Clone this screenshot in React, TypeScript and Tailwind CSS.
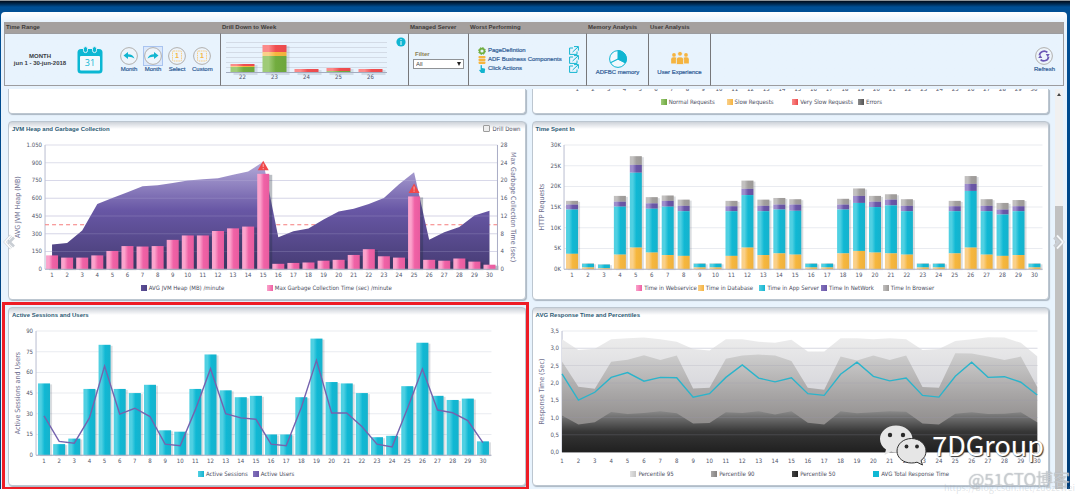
import React from 'react';

const DAYS = Array.from({ length: 30 }, (_, i) => i + 1);

const HEAP = [208, 222, 327, 552, 602, 650, 701, 709, 729, 749, 760, 768, 799, 825, 909, 270, 321, 343, 419, 487, 510, 552, 602, 718, 819, 248, 312, 357, 453, 493];
const GC = [3.1, 2.6, 2.6, 3.1, 4.1, 5.2, 5.1, 5.2, 6.6, 7.6, 7.6, 8.6, 9.2, 9.6, 21.5, 1.2, 1.4, 1.5, 1.9, 2.1, 3.2, 4.5, 2.9, 2.6, 16.4, 2.1, 1.9, 2.4, 1.7, 1];

// cumulative tops in thousands: database, app server, network, browser
const QUIET = [0.4, 1.3, 1.3, 1.4];
const TIME_SPENT = [
  [3.7, 14.4, 15.6, 16.5], QUIET, [0.2, 1.1, 1.1, 1.2], [3.5, 15.1, 16.3, 17.7], [5.2, 23.3, 25.2, 27.3],
  [4, 14.6, 15.9, 17.4], [3.4, 15.1, 16.5, 17.8], [3.2, 14, 15.3, 16.8], QUIET, QUIET,
  [3.2, 14, 15.2, 16.5], [5.2, 17.9, 19.4, 21.4], [3.4, 14, 15.3, 16.8], [3.8, 14.4, 15.6, 17.2], [3.5, 14.1, 15.6, 16.9],
  QUIET, QUIET, [3.8, 14.4, 15.6, 17], [4.4, 16, 17.7, 19.5], [4, 15, 16.3, 17.7],
  [3.8, 15.4, 16.8, 18.1], [3.5, 14, 15.3, 16.9], QUIET, QUIET, [3.8, 14, 15.2, 16.5],
  [5.2, 18.9, 20.6, 22.5], [3.5, 14, 15.3, 16.9], [3.2, 13.2, 14.4, 16], [3.4, 14, 15.2, 16.7], QUIET,
];

const SESSIONS = [52, 8, 12, 48, 80, 48, 45, 51, 18, 17, 48, 73, 47, 42, 43, 15, 15, 42, 84.5, 53, 52, 45, 13, 14, 50, 81.5, 43, 40, 41, 10];
const USERS = [28.5, 10, 8.7, 27, 64.6, 29.8, 34, 28, 8, 6.8, 33, 62.7, 30, 27, 26, 8, 6.8, 34.6, 68.7, 30.5, 30.5, 20.8, 8, 6, 33.5, 62.4, 32.7, 30.7, 25, 9];

const P95 = [3.26, 2.95, 2.99, 3.26, 3.29, 3.31, 3.26, 3.19, 2.98, 2.94, 3.26, 3.26, 3.19, 3.16, 3.25, 2.91, 2.91, 3.29, 3.29, 3.26, 3.29, 3.26, 2.95, 2.98, 3.21, 3.26, 3.32, 3.31, 3.16, 2.77];
const P90 = [2.62, 1.89, 1.83, 2.61, 2.67, 2.8, 2.66, 2.79, 1.84, 1.86, 2.7, 2.79, 2.82, 2.79, 2.63, 1.86, 1.8, 2.76, 2.65, 2.79, 2.66, 2.79, 1.88, 1.86, 2.86, 2.85, 2.76, 2.66, 2.76, 1.88];
const P50 = [1.06, 0.8, 0.86, 1.16, 1.1, 1.13, 1.18, 1.12, 0.83, 0.84, 1.15, 1.13, 1.18, 1.09, 1.18, 0.85, 0.8, 1.18, 1.12, 1.15, 1.18, 1.17, 0.83, 0.8, 1.11, 1.15, 1.1, 1.11, 1.15, 0.86];
const AVG = [2.26, 1.5, 1.73, 2.16, 2.3, 2.05, 2.16, 2.15, 1.59, 1.69, 2.16, 2.52, 2.14, 2.03, 2.15, 1.69, 1.64, 2.25, 2.6, 2.19, 2.06, 2.14, 1.64, 1.59, 2.19, 2.6, 2.16, 2.18, 2.02, 1.65];

const TOP = 10;
const BOTTOM = 134;

const scale = (max: number, bottom = BOTTOM) => (v: number) => bottom - (v / max) * (bottom - TOP);

const points = (data: number[], x: (i: number) => number, y: (v: number) => number) =>
  data.map((v, i) => `${x(i)},${y(v)}`).join(' ');

const area = (data: number[], x: (i: number) => number, y: (v: number) => number) =>
  `${x(0)},${y(0)} ${points(data, x, y)} ${x(data.length - 1)},${y(0)}`;

function Defs() {
  return (
    <svg width="0" height="0" className="absolute" aria-hidden="true">
      <defs>
        {[
          ['cyan', '#4fd0e2', '#10b8d4', '#17b2cc'],
          ['pink', '#fba3cc', '#f062a6', '#e85c9f'],
          ['orange', '#fad089', '#f6b73e', '#efb13c'],
          ['purple', '#9d8ccb', '#6b57a8', '#6653a0'],
          ['gray', '#c2c0bf', '#a3a09e', '#9c9997'],
          ['green', '#9fcb78', '#72ac3f', '#6da63c'],
          ['red', '#fb8a8a', '#f04e50', '#ea4a4c'],
        ].map(([id, a, b, c]) => (
          <linearGradient id={id} key={id}>
            <stop offset="0" stopColor={a} />
            <stop offset="0.25" stopColor={a} />
            <stop offset="0.55" stopColor={b} />
            <stop offset="1" stopColor={c} />
          </linearGradient>
        ))}
        <linearGradient id="heap" x1="0" y1="0" x2="0" y2="1">
          <stop offset="0" stopColor="#b5abd9" />
          <stop offset="0.45" stopColor="#6857a5" />
          <stop offset="1" stopColor="#463c74" />
        </linearGradient>
        <linearGradient id="p95" x1="0" y1="0" x2="0" y2="1">
          <stop offset="0" stopColor="#ececec" />
          <stop offset="0.5" stopColor="#d5d5da" />
          <stop offset="1" stopColor="#c0c0c4" />
        </linearGradient>
        <linearGradient id="p90" x1="0" y1="0" x2="0" y2="1">
          <stop offset="0" stopColor="#cfcfcf" />
          <stop offset="0.4" stopColor="#a9a7a7" />
          <stop offset="0.8" stopColor="#898685" />
        </linearGradient>
        <linearGradient id="p50" x1="0" y1="0" x2="0" y2="1">
          <stop offset="0" stopColor="#888" />
          <stop offset="0.5" stopColor="#363636" />
          <stop offset="1" stopColor="#202020" />
        </linearGradient>
      </defs>
    </svg>
  );
}

type FrameProps = {
  left: number;
  right: number;
  bottom?: number;
  ticks: string[];
  label: string;
  labelX: number;
  lines?: string;
};

// grid lines, left axis and its title
function Frame({ left, right, bottom = BOTTOM, ticks, label, labelX, lines = '#e9ebf0' }: FrameProps) {
  const step = (bottom - TOP) / (ticks.length - 1);
  const mid = (TOP + bottom) / 2;
  return (
    <g>
      {ticks.map((t, i) => (
        <g key={t}>
          <line x1={left} x2={right} y1={TOP + i * step} y2={TOP + i * step} stroke={lines} />
          <text x={left - 3} y={TOP + i * step + 2} textAnchor="end" className="fill-[#4f5468] text-[6px]">{t}</text>
        </g>
      ))}
      <line x1={left} x2={left} y1={TOP} y2={bottom} stroke="#b9bdd0" />
      <text transform={`translate(${labelX} ${mid}) rotate(-90)`} textAnchor="middle" className="fill-[#6f7090] text-[7px]">
        {label}
      </text>
    </g>
  );
}

function DayLabels({ x, y = 142 }: { x: (i: number) => number; y?: number }) {
  return (
    <>
      {DAYS.map((d, i) => (
        <text key={d} x={x(i)} y={y} textAnchor="middle" className="fill-[#4f5468] text-[6px]">{d}</text>
      ))}
    </>
  );
}

function Bar({ x, y, bottom = BOTTOM, fill, w = 12 }: { x: number; y: number; bottom?: number; fill: string; w?: number }) {
  return <rect x={x - w / 2} y={y} width={w} height={Math.max(bottom - y, 0)} fill={`url(#${fill})`} />;
}

function Shadow({ x, y, w = 12, strong = false }: { x: number; y: number; w?: number; strong?: boolean }) {
  return <rect x={x - w / 2 + 2} y={y + 1} width={w} height={BOTTOM - y} fill={strong ? '#1d2a3a' : '#3a4254'} opacity={strong ? 0.3 : 0.18} />;
}

function HeapChart() {
  const x = (i: number) => 43 + i * 15.07;
  const y = scale(1050);
  const g = scale(28);
  return (
    <svg viewBox="0 0 515 146" className="block w-full" role="img" aria-label="JVM heap and garbage collection">
      <Frame left={36} right={488} ticks={['1.050', '900', '750', '600', '450', '300', '150', '0']} label="AVG JVM Heap (MB)" labelX={11} lines="#dddeea" />
      <line x1="36" x2="488" y1={g(10)} y2={g(10)} stroke="#f57c7c" strokeDasharray="4 3" />
      <polygon points={area(HEAP, x, y)} fill="url(#heap)" />
      {[150, 300, 450, 600, 750].map((v) => (
        <line key={v} x1="36" x2="488" y1={y(v)} y2={y(v)} stroke="#c9c5e6" opacity="0.2" />
      ))}
      {GC.map((v, i) => (
        <g key={i}>
          <Shadow x={x(i) + 1} y={g(v)} strong />
          <Bar x={x(i)} y={g(v)} fill="pink" />
        </g>
      ))}
      {[14, 24].map((i) => (
        <g key={i} transform={`translate(${x(i)} ${g(GC[i]) - 13})`}>
          <path d="M0 0 L5.5 9.5 H-5.5 Z" fill="#f0484a" />
          <path d="M0 3 V6.3 M0 7.2 V8.4" stroke="#fbb3b3" strokeWidth="1" />
        </g>
      ))}
      <line x1="36" x2="488" y1={BOTTOM} y2={BOTTOM} stroke="#aeb1c4" />
      <line x1="488" x2="488" y1={TOP} y2={BOTTOM} stroke="#a9acc6" />
      {['28', '24', '20', '16', '12', '8', '4', '0'].map((t, i) => (
        <text key={t} x="491" y={TOP + (i * 124) / 7 + 2} className="fill-[#4f5468] text-[6px]">{t}</text>
      ))}
      <text transform="translate(502 72) rotate(90)" textAnchor="middle" className="fill-[#6f7090] text-[7px]">
        Max Garbage Collection Time (sec)
      </text>
      <DayLabels x={x} />
    </svg>
  );
}

function TimeSpentChart() {
  const x = (i: number) => 39 + i * 15.93;
  const y = scale(30);
  return (
    <svg viewBox="0 0 515 146" className="block w-full" role="img" aria-label="Time spent in">
      <Frame left={31} right={509} ticks={['30K', '25K', '20K', '15K', '10K', '5K', '0K']} label="HTTP Requests" labelX={11} />
      {TIME_SPENT.map(([db, app, net, browser], i) => (
        <g key={i}>
          <Shadow x={x(i)} y={y(browser)} />
          <Bar x={x(i)} y={y(browser)} bottom={y(net)} fill="gray" />
          <Bar x={x(i)} y={y(net)} bottom={y(app)} fill="purple" />
          <Bar x={x(i)} y={y(app)} bottom={y(db)} fill="cyan" />
          <Bar x={x(i)} y={y(db)} fill="orange" />
        </g>
      ))}
      <line x1="31" x2="509" y1={BOTTOM} y2={BOTTOM} stroke="#b4b7c6" />
      <DayLabels x={x} />
    </svg>
  );
}

function SessionsChart() {
  const x = (i: number) => 35 + i * 15.12;
  const y = scale(90);
  return (
    <svg viewBox="0 0 515 146" className="block w-full" role="img" aria-label="Active sessions and users">
      <Frame left={27} right={482} ticks={['90', '75', '60', '45', '30', '15', '0']} label="Active Sessions and Users" labelX={11} />
      {SESSIONS.map((v, i) => (
        <g key={i}>
          <Shadow x={x(i)} y={y(v)} />
          <Bar x={x(i)} y={y(v)} fill="cyan" />
        </g>
      ))}
      <line x1="27" x2="482" y1={BOTTOM} y2={BOTTOM} stroke="#aeb1c4" />
      <polyline points={points(USERS, x, y)} fill="none" stroke="#7563ae" strokeWidth="1.4" />
      <DayLabels x={x} />
    </svg>
  );
}

function ResponseChart() {
  const x = (i: number) => 29 + i * 16.37;
  const y = scale(3.5, 131);
  return (
    <svg viewBox="0 0 515 146" className="block w-full" role="img" aria-label="AVG response time and percentiles">
      <Frame left={29} right={504} bottom={131} ticks={['3,5', '3,0', '2,5', '2,0', '1,5', '1,0', '0,5', '0,0']} label="Response Time (Sec)" labelX={11} />
      <polygon points={area(P95, x, y)} fill="url(#p95)" />
      <polygon points={area(P90, x, y)} fill="url(#p90)" />
      <polygon points={area(P50, x, y)} fill="url(#p50)" />
      {[0.5, 1, 1.5, 2, 2.5, 3].map((v) => (
        <line key={v} x1="29" x2="504" y1={y(v)} y2={y(v)} stroke="#9a9ab0" opacity="0.2" />
      ))}
      <polyline points={points(AVG, x, y)} fill="none" stroke="#2bb4cb" strokeWidth="1.4" />
      <DayLabels x={x} />
    </svg>
  );
}

type LegendItem = { name: string; swatch: string };

function Legend({ items, wide, className = '' }: { items: LegendItem[]; wide?: boolean; className?: string }) {
  return (
    <div className={`flex h-[13px] justify-center ${className}`}>
      <ul className={`grid auto-cols-fr grid-flow-col items-center ${wide ? 'gap-x-[4px]' : ''}`}>
        {items.map((item) => (
          <li key={item.name} className="flex items-center gap-[2px] pr-[1px] whitespace-nowrap text-[6px] leading-[8px] text-[#4a4d60]">
            <span className={`size-[6px] shrink-0 bg-linear-to-r ${item.swatch}`}></span>
            {item.name}
          </li>
        ))}
      </ul>
    </div>
  );
}

const CYAN = 'from-[#4fd0e2] to-[#0fb3d0]';
const PURPLE = 'from-[#8271bb] to-[#6b57a8]';
const PINK = 'from-[#fba3cc] to-[#ee5fa4]';
const ORANGE = 'from-[#fad089] to-[#f4b33c]';
const GRAY = 'from-[#c2c0bf] to-[#9c9997]';

type PanelProps = { title: string; action?: React.ReactNode; marked?: boolean; children: React.ReactNode };

function Panel({ title, action, marked, children }: PanelProps) {
  return (
    <section className="relative rounded-[4px] border border-[#bcc6d0] bg-white bg-linear-to-b from-[#cdd2d9] to-white to-[7px] pb-[5px] shadow-[1px_1px_1px_#aab6c2]">
      <header className="flex h-[13px] items-center justify-between pr-[4px] pl-[3px]">
        <h2 className="font-['Liberation_Sans',sans-serif] text-[6px] leading-[8px] font-bold text-[#2b5a74]">{title}</h2>
        {action}
      </header>
      {children}
      {marked && <div className="pointer-events-none absolute -top-[6px] -right-[4px] -bottom-[4px] -left-[7px] border-[3px] border-b-[2px] border-[#ee1c25]"></div>}
    </section>
  );
}

function ToolSection({ title, children, last }: { title: string; children?: React.ReactNode; last?: boolean }) {
  return (
    <section className="flex flex-col">
      <h2 className="h-[11px] bg-[#a5a09e] pl-px text-[6px] leading-[11px] font-bold whitespace-nowrap text-[#3d3a39]">{title}</h2>
      <div className={`flex h-[53px] items-center border-y border-[#9c9c9f] ${last ? '' : 'border-r-[1px] border-r-[#77777a]'}`}>{children}</div>
    </section>
  );
}

function RoundButton({ label, active, children }: { label: string; active?: boolean; children: React.ReactNode }) {
  return (
    <button className="flex flex-col items-center text-[6px] leading-[8px] text-[#2f5c96] [-webkit-text-stroke:0.2px]">
      <span className={active ? 'bg-[#dbe8fb] outline outline-[#a9c4f0]' : ''}>
        <svg viewBox="0 0 18 18" className="block size-[18px]" fill="none">
          <circle cx="9" cy="9" r="8.4" stroke="#b1afad" fill="#edf4fb" />
          {children}
        </svg>
      </span>
      <span>{label}</span>
    </button>
  );
}

function PageIcon() {
  return (
    <>
      <rect x="4.5" y="4" width="9" height="10" rx="1" stroke="#f8cf86" strokeDasharray="1.6 0.7" />
      <text x="9" y="11.4" textAnchor="middle" className="fill-[#f5b642] text-[7px] font-bold">1</text>
    </>
  );
}

function CalendarIcon() {
  return (
    <svg viewBox="0 0 26 28" className="h-[28px] w-[26px]" aria-hidden="true">
      <rect x="0.5" y="3" width="25" height="24.5" rx="3.5" fill="#0bb7d3" />
      <rect x="3" y="10" width="20" height="14.5" rx="1" fill="#f2f9fe" />
      <rect x="6.5" y="0.6" width="4" height="6" rx="2" fill="#0bb7d3" stroke="#e8f3fd" strokeWidth="0.9" />
      <rect x="15.5" y="0.6" width="4" height="6" rx="2" fill="#0bb7d3" stroke="#e8f3fd" strokeWidth="0.9" />
      <text x="13" y="20.4" textAnchor="middle" className="fill-[#0bb7d3] font-['Open_Sans',sans-serif] text-[9px]">31</text>
    </svg>
  );
}

function WeekChart() {
  const weeks = [
    { week: 22, green: 67, orange: 66, red: 64 },
    { week: 23, green: 56, orange: 52, red: 45 },
    { week: 24, green: 72, orange: 72, red: 69 },
    { week: 25, green: 71, orange: 71, red: 68 },
    { week: 26, green: 72, orange: 72, red: 69 },
  ];
  return (
    <svg viewBox="227 38 162 44" className="ml-[5px] h-[44px] w-[162px]" role="img" aria-label="Requests per week">
      {[42, 47, 52, 57, 62, 67].map((y) => (
        <line key={y} x1="227" x2="388" y1={y + 0.5} y2={y + 0.5} stroke="#d3dbe6" />
      ))}
      {weeks.map((w, i) => {
        const x = 243.5 + i * 32;
        return (
          <g key={w.week}>
            <rect x={x - 9} y={w.red + 1} width="24" height={74 - w.red} fill="#8793a3" opacity="0.25" />
            <Bar x={x} y={w.red} bottom={w.orange} fill="red" w={24} />
            <Bar x={x} y={w.orange} bottom={w.green} fill="orange" w={24} />
            <Bar x={x} y={w.green} bottom={72.5} fill="green" w={24} />
            <text x={x} y="79" textAnchor="middle" className="fill-[#4f5468] font-['DejaVu_Sans_Condensed','DejaVu_Sans',sans-serif] text-[6px]">{w.week}</text>
          </g>
        );
      })}
      <line x1="227" x2="388" y1="72.5" y2="72.5" stroke="#a4acc0" />
    </svg>
  );
}

function ExternalIcon() {
  return (
    <svg viewBox="0 0 10 9" className="h-[9px] w-[10px]" fill="none" stroke="#12b5d0" aria-hidden="true">
      <path d="M4 2 H0.6 V8.4 H8 V5.5" />
      <path d="M5 0.6 H9.4 V4.6 M9.2 0.8 L3.6 6" />
    </svg>
  );
}

const WORST = [
  {
    name: 'PageDefintion',
    icon: (
      <svg viewBox="0 0 8 8" className="size-[8px]" fill="none">
        <circle cx="4" cy="4" r="2.4" stroke="#6fae3f" strokeWidth="1.6" />
        <circle cx="4" cy="4" r="3.5" stroke="#6fae3f" strokeWidth="1" strokeDasharray="1.4 1.35" />
      </svg>
    ),
  },
  {
    name: 'ADF Business Components',
    icon: (
      <svg viewBox="0 0 8 8" className="size-[8px]" fill="#f6b53f">
        <rect x="0.5" y="0" width="7" height="2.3" rx="0.8" />
        <rect x="0.5" y="2.8" width="7" height="2.3" rx="0.8" />
        <rect x="0.5" y="5.6" width="7" height="2.3" rx="0.8" />
      </svg>
    ),
  },
  {
    name: 'Click Actions',
    icon: (
      <svg viewBox="0 0 8 8" className="size-[8px]" fill="#11b4cf">
        <path d="M2.6 0.3 Q3.3 -0.2 3.9 0.4 V3 L6.6 3.4 Q7.2 3.6 7.1 4.4 L6.6 8 H3.2 L1.2 5.4 Q1 4.5 2.6 4.9 Z" />
      </svg>
    ),
  },
];

function Person({ x, y, s }: { x: number; y: number; s: number }) {
  return (
    <g transform={`translate(${x} ${y}) scale(${s})`}>
      <circle cx="0" cy="2" r="2" />
      <path d="M-3 11 V6.5 Q-3 4.6 -1 4.6 H1 Q3 4.6 3 6.5 V11 Z" />
    </g>
  );
}

function Toolbar() {
  return (
    <div className="mx-[3px] grid grid-cols-[216px_188px_60px_118px_62px_62px_1fr] border-x border-[#9c9c9f] font-['Liberation_Sans',sans-serif]">
      <ToolSection title="Time Range">
        <p className="ml-[8px] w-[54px] text-center text-[6px] leading-[7px] font-bold whitespace-nowrap text-[#3a3d44]">
          MONTH
          <br />
          jun 1 - 30-jun-2018
        </p>
        <div className="ml-[10px]">
          <CalendarIcon />
        </div>
        <div className="ml-[17px] flex gap-[6px]">
          <RoundButton label="Month">
            <path d="M3.5 8.5 L8 5 V7.3 Q13 7.4 14.5 11.5 Q12 9.6 8 9.8 V12 Z" fill="#12b5d0" />
          </RoundButton>
          <RoundButton label="Month" active>
            <path d="M14.5 8.5 L10 5 V7.3 Q5 7.4 3.5 11.5 Q6 9.6 10 9.8 V12 Z" fill="#12b5d0" />
          </RoundButton>
          <RoundButton label="Select"><PageIcon /></RoundButton>
          <RoundButton label="Custom"><PageIcon /></RoundButton>
        </div>
      </ToolSection>

      <ToolSection title="Drill Down to Week">
        <WeekChart />
        <button aria-label="Information" className="ml-[8px] self-start pt-[3px]">
          <svg viewBox="0 0 10 10" className="size-[10px]">
            <circle cx="5" cy="5" r="4.6" fill="#10b5d2" />
            <path d="M5 2 V3.1 M5 4 V8" stroke="#d9f5fa" strokeWidth="1.1" />
          </svg>
        </button>
      </ToolSection>

      <ToolSection title="Managed Server">
        <div className="mx-[4px] flex grow flex-col gap-px">
          <label htmlFor="server" className="pl-[2px] text-[6px] leading-[8px] font-bold text-[#8a8054]">Filter</label>
          <div className="relative">
            <select id="server" className="block h-[10px] w-full appearance-none border border-[#8f9296] bg-white px-[2px] text-[6px] leading-[8px] text-[#444]">
              <option>All</option>
            </select>
            <svg viewBox="0 0 4 4" className="pointer-events-none absolute top-[3px] right-[3px] size-[4px]">
              <path d="M0 0 H4 L2 4 Z" fill="#222" />
            </svg>
          </div>
        </div>
      </ToolSection>

      <ToolSection title="Worst Performing">
        <ul className="mr-[7px] ml-[9px] grow">
          {WORST.map((item) => (
            <li key={item.name} className="flex h-[9px] items-center">
              {item.icon}
              <a href="#" className="ml-[2px] grow text-[6px] leading-[9px] whitespace-nowrap text-[#2f5c96] [-webkit-text-stroke:0.2px]">{item.name}</a>
              <ExternalIcon />
            </li>
          ))}
        </ul>
      </ToolSection>

      <ToolSection title="Memory Analysis">
        <a href="#" className="mt-[7px] flex grow flex-col items-center text-[6px] leading-[8px] text-[#2f5c96] [-webkit-text-stroke:0.2px]">
          <svg viewBox="0 0 18 18" className="size-[18px]" fill="none" stroke="#10b5d2">
            <circle cx="9" cy="9" r="8.4" fill="#f1f9fe" />
            <path d="M9 9 V0.6 A8.4 8.4 0 0 1 16.5 12.8 Z" fill="#10b5d2" />
            <path d="M9 9 L1.5 12.8 M9 9 L16.5 12.8" strokeWidth="1.2" />
          </svg>
          ADFBC memory
        </a>
      </ToolSection>

      <ToolSection title="User Analysis">
        <a href="#" className="mt-[7px] flex grow flex-col items-center text-[6px] leading-[8px] text-[#2f5c96] [-webkit-text-stroke:0.2px]">
          <svg viewBox="0 0 18 14" className="mb-[3px] h-[14px] w-[18px]" fill="#f5b440">
            <Person x={3} y={2} s={0.95} />
            <Person x={15} y={2} s={0.95} />
            <g stroke="#e8f3fd" strokeWidth="0.7">
              <Person x={9} y={0.4} s={1.2} />
            </g>
          </svg>
          User Experience
        </a>
      </ToolSection>

      <ToolSection title="" last>
        <div className="mr-[8px] flex grow justify-end">
          <RoundButton label="Refresh">
            <path d="M4.4 8.4 A4.8 4.8 0 0 1 12.4 5.4 M13.6 9.6 A4.8 4.8 0 0 1 5.6 12.6" stroke="#6b57b5" strokeWidth="1.7" />
            <path d="M14.8 7 L12.6 10 L10.8 6.9 Z M3.2 11 L5.4 8 L7.2 11.1 Z" fill="#6b57b5" />
          </RoundButton>
        </div>
      </ToolSection>
    </div>
  );
}

function Chevron({ side }: { side: 'left' | 'right' }) {
  return (
    <button
      aria-label={side === 'left' ? 'Previous' : 'Next'}
      className={`absolute top-[145px] ${side === 'left' ? 'left-[2px]' : 'right-[2px] -scale-x-100'}`}
    >
      <svg viewBox="0 0 12 16" className="h-[16px] w-[12px]" fill="none">
        <path d="M8 1.5 L2 8 L8 14.5 M11 3.5 L6.5 8 L11 12.5" stroke="#c9ced4" strokeWidth="2.6" />
        <path d="M8 1.5 L2 8 L8 14.5" stroke="#fafafa" strokeWidth="1.6" />
      </svg>
    </button>
  );
}

function Watermark() {
  return (
    <div className="pointer-events-none absolute right-0 bottom-0 font-['Noto_Sans_CJK_SC',sans-serif] whitespace-nowrap">
      <div className="absolute right-[36px] bottom-[32px] flex items-center gap-[5px]">
        <svg viewBox="0 0 48 42" className="h-[42px] w-[48px]" aria-hidden="true">
          <path d="M17 1.5 C8 1.5 1 7.5 1 15 C1 19.3 3.3 23 7 25.5 L5.5 31 L12 27.8 Q15 28.6 18 28.4 Q33 27 33.5 15 C33.5 7.5 26 1.5 17 1.5 Z" fill="#e6e6e6" />
          <path d="M32.5 14.5 C24.5 14.5 18 20 18 27 C18 34 24.5 39 32.5 39 Q35.5 39 38 38.2 L43.5 41 L42 36.5 C45.5 34 47 31 47 27 C47 20 40.5 14.5 32.5 14.5 Z" fill="#e6e6e6" stroke="#333" strokeWidth="1" />
          <circle cx="11" cy="11" r="2.2" fill="#2a2a2a" />
          <circle cx="24" cy="11" r="2.2" fill="#2a2a2a" />
          <circle cx="27.5" cy="22.5" r="1.9" fill="#2a2a2a" />
          <circle cx="38" cy="22.5" r="1.9" fill="#2a2a2a" />
        </svg>
        <span className="text-[27px] leading-[36px] text-white [text-shadow:1px_1px_1px_#333,0_0_1px_#777]">7DGroup</span>
      </div>
      <span className="absolute right-[5px] bottom-[3px] text-[9px] leading-[14px] text-[#9aa4ae]/30">https://blog.csdn.net/zuozewei</span>
      <span className="absolute right-[10px] bottom-[7px] text-[17px] leading-[24px] text-[#d9dce0]/60 [text-shadow:0_0_1px_#a3a8ad]">@51CTO博客</span>
    </div>
  );
}

export default function App() {
  return (
    <div className="relative min-h-screen bg-white pr-[10px] font-['DejaVu_Sans_Condensed','DejaVu_Sans',sans-serif]">
      <Defs />
      <div className="relative overflow-hidden border-t border-[#8f9499] bg-[#00427f] bg-linear-to-b from-[#000c1c] via-[#004f95] via-[6px] to-[#003d78] pt-[11px] pr-[3px] pl-px">
        <div className="rounded-t-[4px] bg-[#e8f3fd] bg-linear-to-b from-white to-[#e8f3fd] to-[10px] pt-[10px]">
          <Toolbar />
          <div className="relative mt-[3px] flex">
            <main className="grow pl-[7px]">
              <div className="grid grid-cols-2 gap-x-[6px] gap-y-[7px] pr-[6px] pb-[3px]">
                <div className="rounded-b-[4px] border border-t-0 border-[#bcc6d0] bg-white shadow-[1px_1px_1px_#aab6c2]"></div>
                <div className="rounded-b-[4px] border border-t-0 border-[#bcc6d0] bg-white pb-[5px] shadow-[1px_1px_1px_#aab6c2]">
                  <svg viewBox="0 0 515 6" className="block w-full" role="img" aria-label="Requests per day">
                    <DayLabels x={(i) => 44 + i * 15.75} y={2} />
                  </svg>
                  <Legend
                    wide
                    items={[
                      { name: 'Normal Requests', swatch: 'from-[#9fcb78] to-[#6da63c]' },
                      { name: 'Slow Requests', swatch: ORANGE },
                      { name: 'Very Slow Requests', swatch: 'from-[#fb8a8a] to-[#ea4a4c]' },
                      { name: 'Errors', swatch: 'from-[#8b8b8b] to-[#555]' },
                    ]}
                  />
                </div>

                <Panel
                  title="JVM Heap and Garbage Collection"
                  action={
                    <label className="flex items-center gap-[3px] text-[6px] leading-[8px] text-[#4a4d60]">
                      <input type="checkbox" className="size-[7px] appearance-none rounded-[1px] border border-[#9c9c9c] bg-[#eee]" />
                      Drill Down
                    </label>
                  }
                >
                  <HeapChart />
                  <Legend
                    items={[
                      { name: 'AVG JVM Heap (MB) /minute', swatch: 'from-[#5d4f98] to-[#4f4385]' },
                      { name: 'Max Garbage Collection Time (sec) /minute', swatch: PINK },
                    ]}
                  />
                </Panel>
                <Panel title="Time Spent In">
                  <TimeSpentChart />
                  <Legend
                    items={[
                      { name: 'Time in Webservice', swatch: PINK },
                      { name: 'Time in Database', swatch: ORANGE },
                      { name: 'Time in App Server', swatch: CYAN },
                      { name: 'Time In NetWork', swatch: PURPLE },
                      { name: 'Time In Browser', swatch: GRAY },
                    ]}
                  />
                </Panel>
                <Panel title="Active Sessions and Users" marked>
                  <SessionsChart />
                  <Legend
                    className="pr-[32px]"
                    wide
                    items={[
                      { name: 'Active Sessions', swatch: CYAN },
                      { name: 'Active Users', swatch: PURPLE },
                    ]}
                  />
                </Panel>
                <Panel title="AVG Response Time and Percentiles">
                  <ResponseChart />
                  <Legend
                    wide
                    items={[
                      { name: 'Percentile 95', swatch: 'from-[#e2e2e2] to-[#c6c6c6]' },
                      { name: 'Percentile 90', swatch: 'from-[#a9a7a7] to-[#858281]' },
                      { name: 'Percentile 50', swatch: 'from-[#444] to-[#222]' },
                      { name: 'AVG Total Response Time', swatch: 'from-[#10b8d4] to-[#10b8d4]' },
                    ]}
                  />
                </Panel>
              </div>
            </main>
            {/* scrollbar */}
            <div className="mr-[4px] flex w-[8px] flex-col items-center bg-[#f0f0f0]" aria-hidden="true">
              <svg viewBox="0 0 4 3" className="mt-[4px] h-[3px] w-[4px]">
                <path d="M0 3 L2 0 L4 3 Z" fill="#444" />
              </svg>
              <div className="w-full flex-[28]"></div>
              <div className="w-full flex-[72] bg-[#c1c1c1]"></div>
            </div>
            <Chevron side="left" />
            <Chevron side="right" />
          </div>
        </div>
      </div>
      <Watermark />
    </div>
  );
}
